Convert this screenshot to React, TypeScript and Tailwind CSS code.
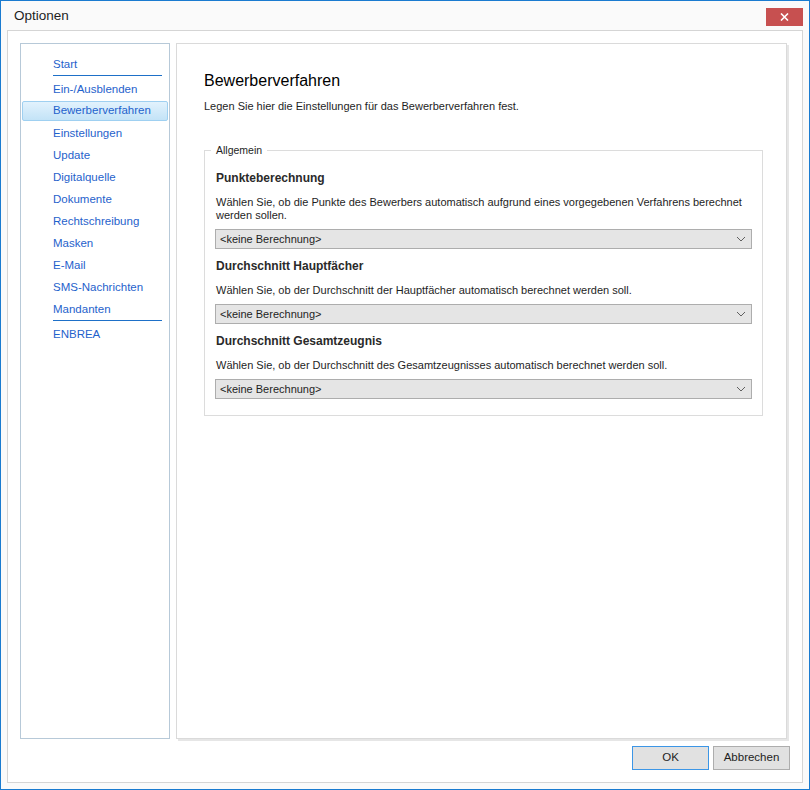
import React from 'react'

const menu = [
  'Start',
  'Ein-/Ausblenden',
  'Bewerberverfahren',
  'Einstellungen',
  'Update',
  'Digitalquelle',
  'Dokumente',
  'Rechtschreibung',
  'Masken',
  'E-Mail',
  'SMS-Nachrichten',
  'Mandanten',
  'ENBREA',
]

const sections = [
  {
    title: 'Punkteberechnung',
    lines: [
      'Wählen Sie, ob die Punkte des Bewerbers automatisch aufgrund eines vorgegebenen Verfahrens berechnet',
      'werden sollen.',
    ],
  },
  {
    title: 'Durchschnitt Hauptfächer',
    lines: ['Wählen Sie, ob der Durchschnitt der Hauptfächer automatisch berechnet werden soll.'],
  },
  {
    title: 'Durchschnitt Gesamtzeugnis',
    lines: ['Wählen Sie, ob der Durchschnitt des Gesamtzeugnisses automatisch berechnet werden soll.'],
  },
]

function Chevron() {
  return (
    <svg width="10" height="6" viewBox="0 0 10 6" className="shrink-0">
      <path d="M1 1 L5 5 L9 1" fill="none" stroke="#606060" strokeWidth="1" />
    </svg>
  )
}

function Dropdown() {
  return (
    <div className="h-[20px] flex items-center justify-between bg-[#e5e5e5] border border-[#adadad] pl-[4px] pr-[5px]">
      <span className="text-[11px] text-[#1e1e1e]">&lt;keine Berechnung&gt;</span>
      <Chevron />
    </div>
  )
}

function Sidebar() {
  return (
    <div className="w-[150px] h-full border border-[#b7c9d8] bg-white pt-[10px]">
      {menu.map((item) => {
        const selected = item === 'Bewerberverfahren'
        const lineAfter = item === 'Start' || item === 'Mandanten'
        return (
          <div key={item}>
            <div className="h-[22px] px-[1px]">
              <div
                className={
                  selected
                    ? 'h-[20px] flex items-center pl-[30px] rounded-[2px] border border-[#9fd0f1] bg-gradient-to-b from-[#e2f2fd] to-[#c3e3f7]'
                    : 'h-[22px] flex items-center pl-[31px]'
                }
              >
                <span className="text-[11.5px] text-[#1f62cc] leading-none">{item}</span>
              </div>
            </div>
            {lineAfter && <div className="ml-[32px] mr-[7px] h-[1px] -mt-[1px] bg-[#1e70c8] mb-[3px]" />}
          </div>
        )
      })}
    </div>
  )
}

function Content() {
  return (
    <div className="w-[611px] h-full border border-[#dadada] bg-white shadow-[2px_2px_0_#e6e6e6] pl-[27px] pt-[27px]">
      <h1 className="text-[16px] leading-[19px] text-black">Bewerberverfahren</h1>
      <p className="mt-[9px] text-[11px] leading-[14px] text-[#1e1e1e]">
        Legen Sie hier die Einstellungen für das Bewerberverfahren fest.
      </p>

      <div className="relative mt-[37px] w-[559px] border border-[#dcdcdc] pl-[10px] pr-[10px] pt-[20px] pb-[16px]">
        <span className="absolute left-[6px] top-[-8px] bg-white px-[5px] text-[10.5px] leading-[14px] text-[#1e1e1e]">
          Allgemein
        </span>
        {sections.map((s, i) => (
          <div key={s.title} className={i > 0 ? 'mt-[10px]' : ''}>
            <div className="pl-[1px] text-[12px] leading-[15px] font-bold text-[#2a2a2a]">{s.title}</div>
            <div className="mt-[10px] pl-[1px] text-[11px] leading-[13px] text-[#1e1e1e]">
              {s.lines.map((l) => (
                <div key={l}>{l}</div>
              ))}
            </div>
            <div className="mt-[7px]">
              <Dropdown />
            </div>
          </div>
        ))}
      </div>
    </div>
  )
}

export default function App() {
  return (
    <div
      className="w-[810px] h-[790px] border border-[#1a7bd0] bg-[#fafafa] flex flex-col"
      style={{ fontFamily: '"Liberation Sans", Arial, sans-serif' }}
    >
      {/* title bar */}
      <div className="h-[29px] shrink-0 flex items-center justify-between pl-[13px] pr-[6px]">
        <span className="text-[13.5px] text-[#1e1e1e] mt-[1px]">Optionen</span>
        <div className="w-[37px] h-[18px] mt-[2px] bg-[#c75050] flex items-center justify-center">
          <svg width="9" height="8" viewBox="0 0 9 8">
            <path d="M1 0.5 L8 7.5 M8 0.5 L1 7.5" stroke="white" strokeWidth="1.6" />
          </svg>
        </div>
      </div>

      {/* body */}
      <div className="mx-[6px] mb-[6px] h-[753px] border border-[#d5d5d5] bg-white flex flex-col p-[12px]">
        <div className="h-[696px] flex gap-[6px]">
          <Sidebar />
          <Content />
        </div>
        <div className="mt-[7px] flex justify-end gap-[4px]">
          <button className="w-[77px] h-[24px] bg-[#e1e1e1] border border-[#3c96e6] text-[11.5px] text-[#1e1e1e]">
            OK
          </button>
          <button className="w-[77px] h-[24px] bg-[#e1e1e1] border border-[#adadad] text-[11.5px] text-[#1e1e1e]">
            Abbrechen
          </button>
        </div>
      </div>
    </div>
  )
}
